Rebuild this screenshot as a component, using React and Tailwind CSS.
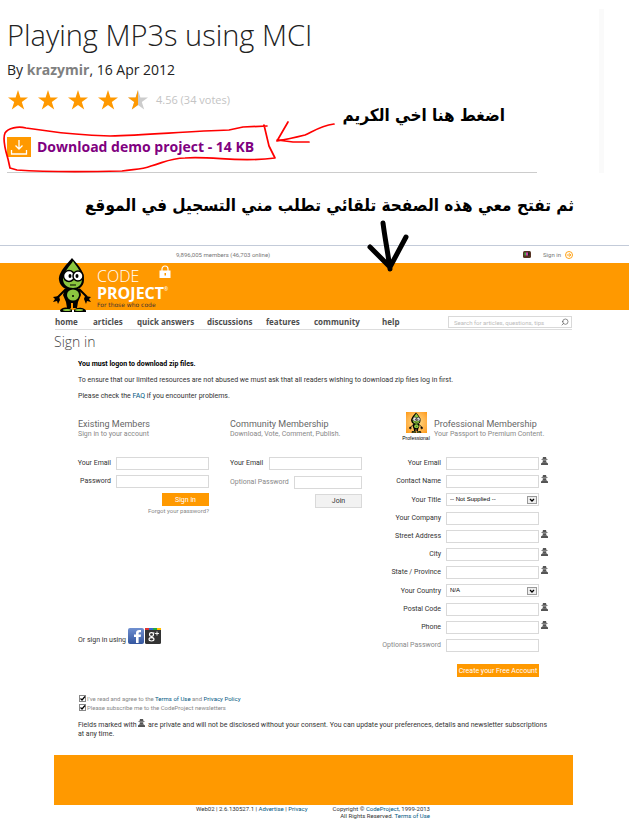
import { Search } from 'lucide-react';

const navLinks = [
  { label: 'home', width: 'w-[38px]' },
  { label: 'articles', width: 'w-[44px]' },
  { label: 'quick answers', width: 'w-[70px]' },
  { label: 'discussions', width: 'w-[59px]' },
  { label: 'features', width: 'w-[48px]' },
  { label: 'community', width: 'w-[68px]' },
  { label: 'help', width: 'w-[30px]' },
];

const proFields = [
  { id: 'pro-email', label: 'Your Email', hidden: true },
  { id: 'pro-name', label: 'Contact Name', hidden: true },
  { id: 'pro-title', label: 'Your Title', options: ['-- Not Supplied --'] },
  { id: 'pro-company', label: 'Your Company' },
  { id: 'pro-street', label: 'Street Address', hidden: true },
  { id: 'pro-city', label: 'City', hidden: true },
  { id: 'pro-state', label: 'State / Province', hidden: true },
  { id: 'pro-country', label: 'Your Country', options: ['N/A'] },
  { id: 'pro-postal', label: 'Postal Code', hidden: true },
  { id: 'pro-phone', label: 'Phone', hidden: true },
  { id: 'pro-password', label: 'Optional Password', muted: true },
];

const STAR = 'M10 0l2.4 7.4H20l-6.2 4.6 2.4 7.6L10 15l-6.2 4.6L6.2 12 0 7.4h7.6z';

const Star = ({ half }) => (
  <svg viewBox="0 0 20 20" className="w-5 h-5">
    <path d={STAR} fill={half ? '#cccccc' : '#ff9900'} />
    {half && <path d="M10 0v15l-6.2 4.6L6.2 12 0 7.4h7.6z" fill="#ff9900" />}
  </svg>
);

const Spy = ({ className = '' }) => (
  <svg viewBox="0 0 14 16" className={`w-[7px] h-2 shrink-0 ${className}`} fill="#555">
    <path d="M4 0h6l1 4h2v1.500H1V4h2z" />
    <path d="M3.500 6.500h7v2L9 11H5L3.500 8.500z" />
    <path d="M0 16v-3l3-2.500h8l3 2.500v3z" />
  </svg>
);

const Mascot = ({ className }) => (
  <svg viewBox="0 0 40 56" className={className}>
    <path d="M20 1C17 5 6 15 7 23c1 7 7 10 13 10s12-3 12-10C33 14 24 6 20 1z" fill="#000" />
    <path d="M21 4c-2 4-10 11-10 18 0 6 5 9 10 9s9-3 9-9c0-7-6-13-9-18z" fill="#8cc63f" />
    <path d="M14 32L5 41M27 32l8 8" stroke="#000" strokeWidth="2" fill="none" />
    <path d="M1 40l6-1 1 4-2 4-1-3-4 1 2-3zM39 40l-6-1-1 3 2 5 1-3 4 1-2-3z" fill="#000" />
    <path d="M13 32h15l1 6-3 7-1 6h-4v-5h-2v5h-4l-1-6-3-7z" fill="#000" />
    <ellipse cx="21" cy="38" rx="6" ry="5.500" fill="#8cc63f" />
    <circle cx="21" cy="39" r="1" fill="#000" />
    <path d="M8 54c0-4 10-5 12-1v2H9zM22 55v-2c3-4 12-2 12 1v1z" fill="#000" />
    <ellipse cx="15" cy="53" rx="4" ry="1" fill="#8cc63f" />
    <ellipse cx="27" cy="53" rx="4" ry="1" fill="#8cc63f" />
    <circle cx="17" cy="19" r="5.500" fill="#fff" stroke="#000" strokeWidth="1.500" />
    <circle cx="26" cy="19" r="5" fill="#fff" stroke="#000" strokeWidth="1.500" />
    <ellipse cx="18" cy="19" rx="1.500" ry="2" fill="#000" />
    <ellipse cx="25" cy="19" rx="1.500" ry="2" fill="#000" />
    <path d="M18 28h6" stroke="#000" strokeWidth="1" />
  </svg>
);

const inputClass = 'h-[13px] border border-[#d9d9d9] bg-white px-[3px] text-[7px] outline-none';

const SelectBox = ({ id, options }) => (
  <div className="relative w-[93px] shrink-0">
    <select
      id={id}
      className="block w-full h-[13px] appearance-none border border-[#d9d9d9] bg-white px-[3px] font-['Liberation_Sans',sans-serif] text-[6px] leading-[11px] text-black"
    >
      {options.map((option) => (
        <option key={option}>{option}</option>
      ))}
    </select>
    <svg viewBox="0 0 10 8" className="pointer-events-none absolute right-[2px] top-[3px] w-[10px] h-2">
      <rect x="0.500" y="0.500" width="9" height="7" fill="#eee" stroke="#999" />
      <path d="M3 3l2 2 2-2" fill="none" stroke="#000" strokeWidth="1.300" />
    </svg>
  </div>
);

const CheckBox = ({ id }) => (
  <span className="relative ml-px h-[7px] w-[7px]">
    <input id={id} type="checkbox" defaultChecked className="peer block h-[7px] w-[7px] appearance-none border border-[#888] bg-white" />
    <svg viewBox="0 0 7 7" className="pointer-events-none absolute inset-0 hidden h-[7px] w-[7px] peer-checked:block">
      <path d="M1.500 3.500l1.500 1.500 3-3.500" fill="none" stroke="#000" strokeWidth="1.200" />
    </svg>
  </span>
);

const ProField = ({ id, label, hidden, options, muted }) => (
  <div className={`flex items-center justify-end ${options ? 'h-[19px]' : 'h-[18px]'}`}>
    <label htmlFor={id} className={`mr-[5px] whitespace-nowrap ${muted ? 'text-[#888]' : 'text-[#333]'}`}>
      {label}
    </label>
    {options ? (
      <SelectBox id={id} options={options} />
    ) : (
      <input id={id} type={muted ? 'password' : 'text'} className={`${inputClass} w-[93px] shrink-0`} />
    )}
    <span className="w-[10px] shrink-0 pl-[2px] pb-1">{hidden && <Spy />}</span>
  </div>
);

const ColumnTitle = ({ title, text }) => (
  <div className="whitespace-nowrap">
    <h2 className="text-[9px] leading-[11px] text-[#666]">{title}</h2>
    <p className="text-[7px] leading-[9px] text-[#888]">{text}</p>
  </div>
);

const Article = () => (
  <section className="relative h-[173px] pl-[7px] pt-[14px]">
    <h1 className="text-[29px] leading-[42px] font-light text-[#222]">Playing MP3s using MCI</h1>
    <p className="mt-[4px] text-[14px] leading-5 text-[#222]">
      By <a href="#author" className="font-bold text-[#808080]">krazymir</a>, 16 Apr 2012
    </p>
    <div className="mt-[10px] flex items-center gap-[10px] pl-px">
      <Star />
      <Star />
      <Star />
      <Star />
      <Star half />
      <span className="-ml-[2px] text-[11px] leading-5 text-[#c4c4c4]">4.56 (34 votes)</span>
    </div>
    <a href="#download" className="mt-[27px] flex items-center gap-[6px] text-[14px] leading-5 font-bold text-[#800080]">
      <svg viewBox="0 0 24 20" className="w-6 h-5">
        <path d="M0 0h24v20H0z" fill="#ff9900" />
        <path d="M12 3v9M8.500 8.500L12 12l3.500-3.500M4.500 13v4h15v-4" fill="none" stroke="#fff" strokeWidth="1.300" />
      </svg>
      Download demo project - 14 KB
    </a>
    <div className="absolute left-[7px] right-[92px] bottom-0 h-px bg-[#ccc]" />
    <div className="absolute right-[25px] top-[9px] bottom-0 w-[5px] bg-[#fafafa]" />
    <svg viewBox="0 0 340 60" className="pointer-events-none absolute left-0 top-[118px] w-[340px] h-[60px]">
      <g fill="none" stroke="#f00" strokeWidth="1.700" strokeLinecap="round" strokeLinejoin="round">
        <path d="M267 8L243 9l-14 3c-40 1-80 5-119 6-29-1-49-3-62-5L26 10c-8-2-18 0-21 5-3 7 1 19 3 26l2 9 7 2c29 2 60 2 105 1 13-2 19-1 29-5 14-4 20-8 34-8 29-2 54 5 90 0l-6-12-5-21" />
        <path d="M334 6c-14 2-22 8-29 11-8 2-16 4-28 6l11-19M277 22l16 2h16" />
      </g>
    </svg>
    <p
      dir="rtl"
      lang="ar"
      className="absolute right-[124px] top-[101px] whitespace-nowrap font-['DejaVu_Sans_Condensed','DejaVu_Sans',sans-serif] text-[17px] leading-7 font-bold text-black"
    >
      اضغط هنا اخي الكريم
    </p>
  </section>
);

const Banner = () => (
  <header>
    <div className="flex h-[18px] items-center border-t border-[#c3cbd9] pr-[56px] font-['Roboto',sans-serif] text-[6px] text-[#777]">
      <span className="ml-[176px]">9,896,005 members (46,703 online)</span>
      <svg viewBox="0 0 8 7" className="ml-auto mr-[12px] w-2 h-[7px]">
        <rect width="8" height="7" rx="1.500" fill="#532" />
        <path d="M1.500 1.500h1.500v3H1.500z" fill="#4a4" />
        <path d="M3 1.500h2v3H3z" fill="#c4a" />
        <path d="M5 1.500h1.500v3H5z" fill="#222" />
      </svg>
      <a href="#signin" className="flex items-center gap-1">
        Sign in
        <svg viewBox="0 0 8 8" className="w-2 h-2" fill="none" stroke="#ff9900" strokeWidth="0.900">
          <circle cx="4" cy="4" r="3.500" />
          <path d="M1.800 4h4M4 2.200L5.800 4 4 5.800" />
        </svg>
      </a>
    </div>
    <div className="relative flex h-[47px] bg-[#ff9900] pl-[97px] pt-[5px]">
      <Mascot className="absolute left-[52px] -top-[6px] w-10 h-14" />
      <div>
        <div className="text-[16px] leading-[17px] font-light text-white">CODE</div>
        <div className="flex text-[16px] leading-4 font-bold text-white">
          PROJECT<span className="text-[5px] leading-[8px] font-normal">®</span>
        </div>
        <div className="font-['DejaVu_Sans',sans-serif] text-[6px] leading-[7px] text-[#433]">For those who code</div>
      </div>
      <svg viewBox="0 0 12 13" className="absolute left-[159px] top-[2px] w-3 h-[13px]">
        <path d="M3 6V4a3 3 0 016 0v2" fill="none" stroke="#fff" strokeWidth="1.200" />
        <path d="M0.500 5.500h11V13H0.500z" fill="#fff" />
        <path d="M5.500 8h1.500v2.500H5.500z" fill="#ff9900" />
      </svg>
    </div>
  </header>
);

const Nav = () => (
  <nav className="ml-[55px] mr-[57px] flex h-5 items-end border-b border-[#ddd]">
    <div className="flex h-[14px] items-center text-[8px] font-bold text-[#4d4d4d]">
      {navLinks.map((link) => (
        <a key={link.label} href={`#${link.label}`} className={`whitespace-nowrap ${link.width}`}>
          {link.label}
        </a>
      ))}
    </div>
    <div className="relative mb-px ml-auto w-[124px]">
      <input
        type="search"
        aria-label="Search"
        placeholder="Search for articles, questions, tips"
        className="block w-full h-3 border border-[#d9d9d9] pl-[5px] font-['Roboto',sans-serif] text-[6px] placeholder:text-[#bbb] outline-none"
      />
      <Search className="absolute right-[3px] top-[2px] w-2 h-2 -scale-x-100 text-[#555]" />
    </div>
  </nav>
);

const ExistingMembers = () => (
  <form className="flex w-[131px] flex-col">
    <ColumnTitle title="Existing Members" text="Sign in to your account" />
    <div className="mt-[15px] flex h-[18px] items-center justify-end">
      <label htmlFor="email" className="mr-[5px] whitespace-nowrap">Your Email</label>
      <input id="email" className={`${inputClass} w-[93px] shrink-0`} />
    </div>
    <div className="flex h-[18px] items-center justify-end">
      <label htmlFor="password" className="mr-[5px] whitespace-nowrap">Password</label>
      <input id="password" type="password" className={`${inputClass} w-[93px] shrink-0`} />
    </div>
    <button type="button" className="mt-[3px] h-[13px] w-[47px] self-end bg-[#ff9900] leading-[12px] text-white">
      Sign in
    </button>
    <a href="#forgot" className="self-end text-[6px] leading-[10px] text-[#888]">Forgot your password?</a>
    <div className="mt-[111px] flex items-center gap-px">
      <span className="mr-px whitespace-nowrap pt-2">Or sign in using</span>
      <a href="#facebook" aria-label="Facebook">
        <svg viewBox="0 0 16 16" className="w-4 h-4">
          <defs>
            <linearGradient id="fb" x2="0" y2="1">
              <stop stopColor="#7090d0" />
              <stop offset="1" stopColor="#34569f" />
            </linearGradient>
          </defs>
          <rect width="16" height="16" rx="2" fill="url(#fb)" />
          <path d="M8 15V9H6V6.500h2V5c0-2.500 1.500-3.500 5-3v2.300c-2-.3-2.400.2-2.400 1v1.200H13L12.700 9h-2.100v6z" fill="#fff" />
        </svg>
      </a>
      <a href="#google" aria-label="Google Plus">
        <svg viewBox="0 0 16 16" className="w-4 h-4">
          <rect width="16" height="16" rx="1.500" fill="#333" />
          <path d="M0 0h4v2H0z" fill="#d33" />
          <path d="M4 0h4v2H4z" fill="#36c" />
          <path d="M8 0h4v2H8z" fill="#2a4" />
          <path d="M12 0h4v2h-4z" fill="#fb0" />
          <ellipse cx="6.500" cy="6.500" rx="2" ry="1.900" fill="none" stroke="#fff" strokeWidth="1.100" />
          <ellipse cx="6.500" cy="11.300" rx="2.500" ry="1.700" fill="none" stroke="#fff" strokeWidth="1.100" />
          <path d="M6 8.400l2 1.500M8 5h1.500M10 5.500h4M12 3.500v4" stroke="#fff" strokeWidth="0.900" />
        </svg>
      </a>
    </div>
  </form>
);

const CommunityMembership = () => (
  <form className="flex w-[132px] flex-col">
    <ColumnTitle title="Community Membership" text="Download, Vote, Comment, Publish." />
    <div className="mt-[15px] flex h-[18px] items-center justify-between">
      <label htmlFor="c-email" className="whitespace-nowrap">Your Email</label>
      <input id="c-email" className={`${inputClass} w-[93px] shrink-0`} />
    </div>
    <div className="flex h-[20px] items-center justify-between">
      <label htmlFor="c-password" className="whitespace-nowrap text-[#888]">Optional Password</label>
      <input id="c-password" type="password" className={`${inputClass} w-[68px] shrink-0`} />
    </div>
    <button type="button" className="mt-[2px] h-[14px] w-[47px] self-end border border-[#d9d9d9] bg-[#f2f2f2] leading-[11px]">
      Join
    </button>
  </form>
);

const ProfessionalMembership = () => (
  <form className="flex w-[167px] flex-col">
    <div className="-mt-[7px] flex h-[42px] items-start gap-[4px] pl-5">
      <div className="flex w-[28px] flex-col items-center">
        <div className="flex h-[21px] w-[21px] shrink-0 justify-center bg-[#ff9900] bg-radial from-[#ffe08a] to-[#ff9900]">
          <Mascot className="h-[21px] w-[18px]" />
        </div>
        <span className="font-['Liberation_Sans',sans-serif] text-[5px] leading-[10px] text-black">Professional</span>
      </div>
      <div className="pt-[7px]">
        <ColumnTitle title="Professional Membership" text="Your Passport to Premium Content." />
      </div>
    </div>
    {proFields.map((field) => (
      <ProField key={field.id} {...field} />
    ))}
    <button
      type="button"
      className="mt-[10px] mr-[10px] h-[13px] w-[82px] self-end whitespace-nowrap bg-[#ff9900] leading-[12px] text-white"
    >
      Create your Free Account
    </button>
  </form>
);

const App = () => {
  return (
    <div className="min-h-screen overflow-hidden bg-white font-['Open_Sans','Noto_Sans',sans-serif]">
      <Article />
      <div className="relative">
        <p
          dir="rtl"
          lang="ar"
          className="h-[72px] whitespace-nowrap pr-[55px] pt-[18px] font-['DejaVu_Sans_Condensed','DejaVu_Sans',sans-serif] text-[17px] leading-7 font-bold text-black"
        >
          ثم تفتح معي هذه الصفحة تلقائي تطلب مني التسجيل في الموقع
        </p>
        <Banner />
        <svg viewBox="0 0 44 54" className="pointer-events-none absolute left-[366px] top-[47px] w-11 h-[54px]">
          <path d="M17 3c2 16 5 30 7 46M4 27l20 20L40 17" fill="none" stroke="#000" strokeWidth="5" strokeLinecap="round" />
        </svg>
      </div>
      <Nav />
      <main className="pl-[54px] pr-[57px] font-['Roboto',sans-serif] text-[7px] leading-[10px] text-[#333]">
        <h1 className="font-['Open_Sans',sans-serif] text-[14px] leading-6 font-light text-[#444]">Sign in</h1>
        <div className="ml-6">
          <p className="mt-[5px] font-bold text-black">You must logon to download zip files.</p>
          <p className="mt-[6px]">
            To ensure that our limited resources are not abused we must ask that all readers wishing to download zip files log in first.
          </p>
          <p className="mt-[6px]">
            Please check the <a href="#faq" className="text-[#005782]">FAQ</a> if you encounter problems.
          </p>
          <div className="mt-[18px] grid grid-cols-[152px_152px_1fr]">
            <ExistingMembers />
            <CommunityMembership />
            <ProfessionalMembership />
          </div>
          <div className="mt-[17px] text-[6px] leading-[9px] text-[#888]">
            <div className="flex items-center gap-px">
              <CheckBox id="terms" />
              <label htmlFor="terms">
                I've read and agree to the <a href="#terms" className="text-[#005782]">Terms of Use</a> and{' '}
                <a href="#privacy" className="text-[#005782]">Privacy Policy</a>
              </label>
            </div>
            <div className="flex items-center gap-px">
              <CheckBox id="news" />
              <label htmlFor="news">Please subscribe me to the CodeProject newsletters</label>
            </div>
          </div>
          <p className="mt-[7px] pr-5 leading-[9px]">
            Fields marked with <Spy className="mr-px inline align-baseline" /> are private and will not be disclosed without your
            consent. You can update your preferences, details and newsletter subscriptions at any time.
          </p>
        </div>
      </main>
      <footer className="ml-[54px] mr-[56px] mt-4 font-['Roboto',sans-serif] text-[6px] leading-[7px] text-[#333]">
        <div className="h-[50px] bg-[#ff9900]" />
        <div className="flex pl-[142px] pr-[143px] justify-between">
          <p>
            Web02 | 2.6.130527.1 | <a href="#advertise" className="text-[#005782]">Advertise</a> |{' '}
            <a href="#privacy" className="text-[#005782]">Privacy</a>
          </p>
          <p className="text-right">
            Copyright © <a href="#cp" className="text-[#005782]">CodeProject</a>, 1999-2013
            <br />
            All Rights Reserved. <a href="#terms" className="text-[#005782]">Terms of Use</a>
          </p>
        </div>
      </footer>
    </div>
  );
};

export default App;
